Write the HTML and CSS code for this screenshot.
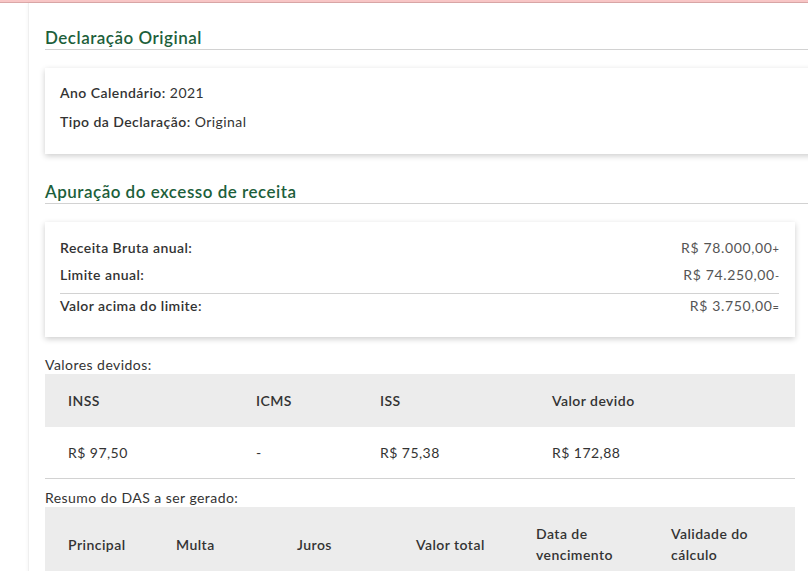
FILE: index.html
```html
<!DOCTYPE html>
<html lang="pt-BR">
<head>
  <meta charset="UTF-8">
  <title>Declaração Original</title>
  <link rel="stylesheet" href="styles.css">
</head>
<body>
  <div class="alert-bar"></div>

  <div class="page">
    <h2 class="section-title">Declaração Original</h2>
    <div class="card card-wide">
      <div class="info-row"><b>Ano Calendário:</b> 2021</div>
      <div class="info-row"><b>Tipo da Declaração:</b> Original</div>
    </div>

    <h2 class="section-title second">Apuração do excesso de receita</h2>
    <div class="card card-calc">
      <div class="calc-row">
        <b>Receita Bruta anual:</b>
        <span class="amount">R$ 78.000,00<small>+</small></span>
      </div>
      <div class="calc-row">
        <b>Limite anual:</b>
        <span class="amount">R$ 74.250,00<small>-</small></span>
      </div>
      <div class="calc-row total">
        <b>Valor acima do limite:</b>
        <span class="amount">R$ 3.750,00<small>=</small></span>
      </div>
    </div>

    <p class="table-label first">Valores devidos:</p>
    <table class="grid grid-dues">
      <thead>
        <tr>
          <th class="c1">INSS</th>
          <th class="c2">ICMS</th>
          <th class="c3">ISS</th>
          <th>Valor devido</th>
        </tr>
      </thead>
      <tbody>
        <tr>
          <td>R$ 97,50</td>
          <td>-</td>
          <td>R$ 75,38</td>
          <td>R$ 172,88</td>
        </tr>
      </tbody>
    </table>

    <p class="table-label">Resumo do DAS a ser gerado:</p>
    <table class="grid grid-das">
      <thead>
        <tr>
          <th class="c1">Principal</th>
          <th class="c2">Multa</th>
          <th class="c3">Juros</th>
          <th class="c4">Valor total</th>
          <th class="c5">Data de vencimento</th>
          <th class="c6">Validade do cálculo</th>
        </tr>
      </thead>
    </table>
  </div>
</body>
</html>
```

FILE: styles.css
```css
:root {
  --green: #1d5f3b;
  --text: #333;
  --muted: #555;
  --line: #d2d2d2;
  --head-bg: #ececec;
}

body {
  margin: 0;
  background: #fff;
  color: var(--text);
  font-family: 'Lato', 'Open Sans', sans-serif;
  font-size: 14px;
  letter-spacing: 0.45px;
  overflow: hidden;
}

.alert-bar {
  height: 2px;
  background: #f8c6c6;
  border-bottom: 1px solid #dba7a7;
}

.page {
  margin-left: 28px;
  padding: 25px 0 0 16px;
  border-left: 1px solid #efefef;
  box-shadow: -1px 0 3px rgba(0, 0, 0, 0.03);
  min-height: 600px;
}

.section-title {
  margin: 0;
  font-size: 17px;
  line-height: 20px;
  font-weight: 600;
  letter-spacing: 0.5px;
  color: var(--green);
  padding-bottom: 1px;
  border-bottom: 1px solid var(--line);
}

.section-title.second {
  margin-top: 28px;
}

.card {
  background: #fff;
  box-shadow: 0 2px 6px rgba(0, 0, 0, 0.2);
  margin-top: 18px;
}

b {
  font-weight: 600;
}

/* first card runs off the right edge */
.card-wide {
  margin-right: -20px;
  padding: 10px 15px 18px;
}

.info-row {
  line-height: 29px;
}

.card-calc {
  margin-right: 13px;
  padding: 12px 16px 20px 15px;
}

.calc-row {
  display: flex;
  justify-content: space-between;
  height: 27px;
  line-height: 27px;
}

.calc-row.total {
  margin-top: 5px;
  border-top: 1px solid var(--line);
  height: 23px;
  line-height: 23px;
}

.amount {
  color: var(--muted);
  letter-spacing: 0.65px;
}

.amount small {
  font-size: 11px;
  line-height: 0;
  letter-spacing: 0;
}

.table-label {
  margin: 19px 0 0;
  line-height: 18px;
}

.table-label:not(.first) {
  margin-top: 10px;
}

.grid {
  width: 750px;
  border-collapse: collapse;
  table-layout: fixed;
}

.grid th {
  background: var(--head-bg);
  font-weight: 600;
  text-align: left;
  padding: 0 0 0 23px;
  height: 53px;
  line-height: 21px;
}

.grid td {
  padding: 0 0 0 23px;
  height: 51px;
  border-bottom: 1px solid var(--line);
}

.grid-dues .c1 { width: 165px; }
.grid-dues .c2 { width: 101px; }
.grid-dues .c3 { width: 149px; }

.grid-das th { height: 74px; }
.grid-das .c1 { width: 85px; }
.grid-das .c2 { width: 98px; }
.grid-das .c3 { width: 96px; }
.grid-das .c4 { width: 97px; }
.grid-das .c5 { width: 92px; padding-right: 20px; }
.grid-das .c6 { padding-right: 20px; }
```
